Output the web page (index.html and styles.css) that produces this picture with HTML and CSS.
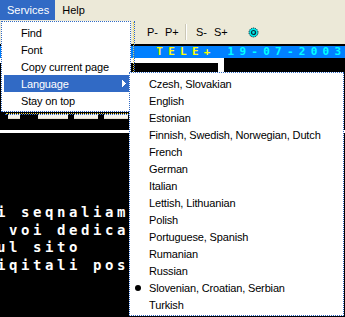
FILE: index.html
```html
<!DOCTYPE html>
<html lang="en">
<head>
    <meta charset="UTF-8">
    <title>Teletext</title>
    <link rel="stylesheet" href="styles.css">
</head>
<body>
    <!-- Menu bar -->
    <div class="menubar">
        <span class="menubar-item active">Services</span>
        <span class="menubar-item">Help</span>
    </div>

    <!-- Page / subpage buttons -->
    <div class="toolbar">
        <span class="tool">P-</span>
        <span class="tool">P+</span>
        <span class="tool-sep"></span>
        <span class="tool">S-</span>
        <span class="tool">S+</span>
        <svg class="tool-icon" width="11" height="11" viewBox="0 0 11 11">
            <circle cx="5.5" cy="5.5" r="4.5" fill="#00e6e6" stroke="#0a2a3a" stroke-width="1" stroke-dasharray="1.2 0.8"/>
            <circle cx="5.5" cy="5.5" r="2" fill="#00e6e6" stroke="#0a2a3a" stroke-width="1.2"/>
        </svg>
    </div>

    <!-- Teletext page -->
    <div class="teletext">
        <div class="tt-head">             <span class="tt-title">TELE+</span> <span class="tt-date">19-07-2003</span></div>
        <div class="tt-row-top"></div>
        <div class="tt-row-mid"><div class="tt-strip"></div></div>
        <div class="tt-blocks">
            <div class="blk blk-s"></div>
            <div class="blk blk-l"></div>
            <div class="blk blk-m"></div>
            <div class="blk blk-m"></div>
        </div>
        <div class="tt-rule"></div>
        <div class="tt-lines">
            <div class="tt-line">i seqnaliam</div>
            <div class="tt-line"> voi dedica</div>
            <div class="tt-line">ul sito</div>
            <div class="tt-line">iqitali pos</div>
        </div>
    </div>

    <!-- Services menu -->
    <div class="menu menu-main">
        <div class="menu-item">Find</div>
        <div class="menu-item">Font</div>
        <div class="menu-item">Copy current page</div>
        <div class="menu-item selected">Language
            <svg class="menu-arrow" width="4" height="7" viewBox="0 0 4 7" shape-rendering="crispEdges">
                <path d="M0 0h1v7H0z M1 1h1v5H1z M2 2h1v3H2z M3 3h1v1H3z" fill="#fff"/>
            </svg>
        </div>
        <div class="menu-item">Stay on top</div>
    </div>

    <!-- Language submenu -->
    <div class="menu menu-sub">
        <div class="menu-item">Czesh, Slovakian</div>
        <div class="menu-item">English</div>
        <div class="menu-item">Estonian</div>
        <div class="menu-item">Finnish, Swedish, Norwegian, Dutch</div>
        <div class="menu-item">French</div>
        <div class="menu-item">German</div>
        <div class="menu-item">Italian</div>
        <div class="menu-item">Lettish, Lithuanian</div>
        <div class="menu-item">Polish</div>
        <div class="menu-item">Portuguese, Spanish</div>
        <div class="menu-item">Rumanian</div>
        <div class="menu-item">Russian</div>
        <div class="menu-item checked">Slovenian, Croatian, Serbian</div>
        <div class="menu-item">Turkish</div>
    </div>
</body>
</html>
```

FILE: styles.css
```css
body {
    margin: 0;
    width: 345px;
    height: 317px;
    overflow: hidden;
    position: relative;
    display: flex;
    flex-direction: column;
    background-color: #ece9d8;
    font-family: 'Liberation Sans', Arial, sans-serif;
    font-size: 11px;
    color: #000;
}

/* Menu bar */
.menubar {
    display: flex;
    height: 20px;
    line-height: 20px;
}

.menubar-item {
    padding: 0 6px 0 7px;
}

.menubar-item.active {
    background-color: #316ac5;
    color: #fff;
}

/* Toolbar */
.toolbar {
    display: flex;
    align-items: center;
    height: 24px;
    padding-left: 145px;
}

.tool {
    width: 16px;
    padding-left: 2px;
}

.tool-sep {
    height: 16px;
    border-left: 1px solid #cbc7b6;
    border-right: 1px solid #fff;
    margin: 0 7px 0 4px;
}

.tool-icon {
    margin-left: 18px;
}

/* Teletext page */
.teletext {
    flex: 1;
    min-height: 0;
    background-color: #000;
    padding-top: 2px;
}

.tt-head {
    height: 12px;
    padding-left: 2px;
    background-color: #0080ff;
    font: bold 11px/12px 'DejaVu Sans Mono', monospace;
    letter-spacing: 5.25px;
    white-space: pre;
}

.tt-title {
    color: #ffff00;
}

.tt-date {
    color: #00ffff;
}

.tt-row-top {
    width: 224px;
    height: 5px;
    background-color: #fff;
}

.tt-row-mid {
    height: 51px;
}

.tt-strip {
    width: 6px;
    height: 100%;
    margin-left: 218px;
    background-color: #fff;
}

.tt-blocks {
    display: flex;
    gap: 6px;
    height: 5px;
    padding-left: 8px;
}

.blk {
    background-color: #f6f4ec;
    border-bottom: 1px solid #e2dfcf;
}

.blk-s {
    width: 12px;
    margin-right: 12px;
}

.blk-l {
    width: 30px;
}

.blk-m {
    width: 24px;
}

.tt-rule {
    height: 3px;
    margin-top: 11px;
    background-color: #fff;
}

.tt-lines {
    margin: 71px 0 0 -3px;
    color: #fff;
    font: bold 14px/17.7px 'DejaVu Sans Mono', monospace;
    letter-spacing: 3.57px;
}

.tt-line {
    white-space: pre;
}

/* Drop-down menus */
.menu {
    position: absolute;
    z-index: 10;
    padding: 2px 1px 2px 2px;
    background-color: #fff;
    border: 1px dotted #316ac5;
    letter-spacing: -0.15px;
}

.menu-main {
    left: 1px;
    top: 21px;
    width: 125px;
}

/* dithered menu shadow */
.menu-main::before,
.menu-main::after {
    content: '';
    position: absolute;
    top: -1px;
    left: 3px;
    right: -5px;
    bottom: -4px;
    border-right: 1px dotted #316ac5;
    border-bottom: 1px dotted #316ac5;
}

.menu-main::before {
    top: 0;
    left: 4px;
    right: -4px;
    bottom: -3px;
    border-color: #e6d44c;
}

.menu-sub {
    left: 129px;
    top: 72px;
    width: 210px;
    z-index: 11;
}

.menu-item {
    position: relative;
    display: flex;
    align-items: center;
    height: 17px;
    padding-left: 17px;
    white-space: nowrap;
}

.menu-item.selected {
    background-color: #316ac5;
    color: #fff;
}

.menu-arrow {
    margin-left: auto;
    margin-right: 3px;
}

.menu-item.checked::before {
    content: '';
    position: absolute;
    left: 3px;
    top: 6px;
    width: 6px;
    height: 6px;
    border-radius: 50%;
    background-color: #000;
}
```
